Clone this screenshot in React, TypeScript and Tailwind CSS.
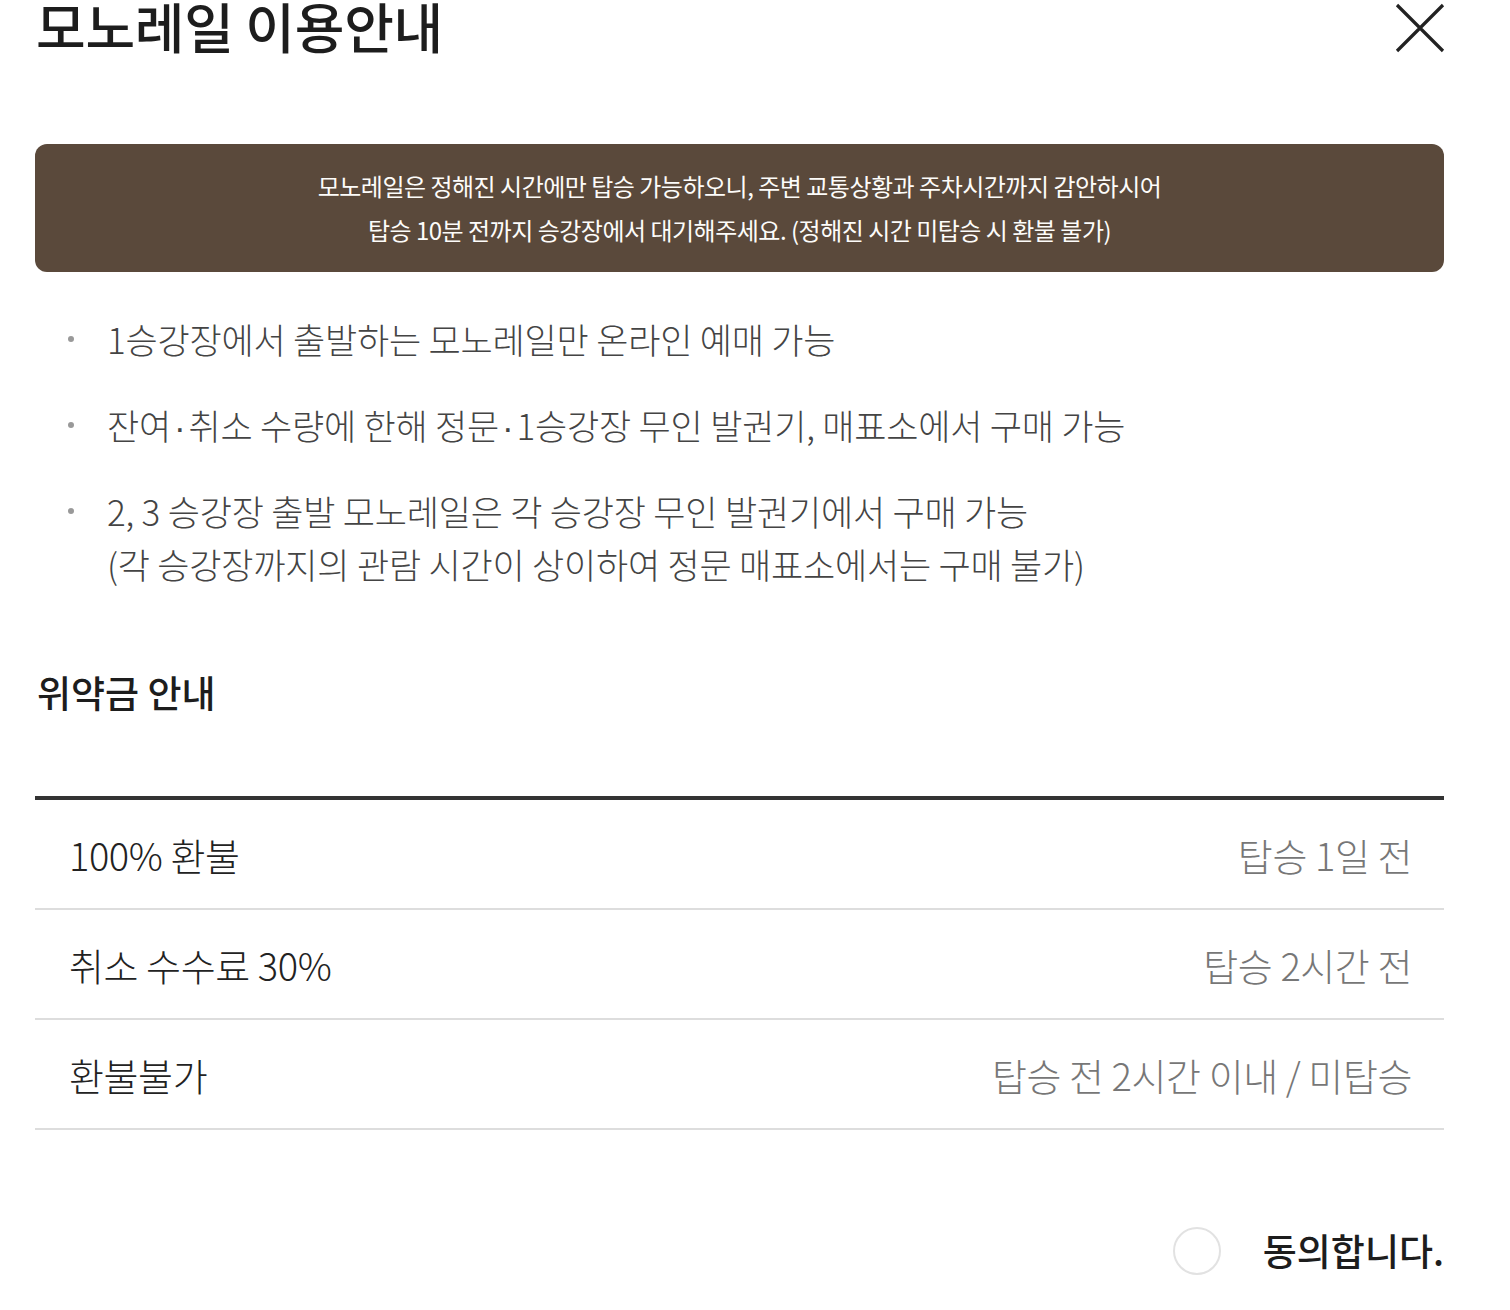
const rows = [
  { label: "100% 환불", when: "탑승 1일 전" },
  { label: "취소 수수료 30%", when: "탑승 2시간 전" },
  { label: "환불불가", when: "탑승 전 2시간 이내 / 미탑승" },
]

function Dot() {
  return <span className="mx-[3px] leading-none font-['Liberation_Sans']">·</span>
}

function CloseIcon() {
  return (
    <svg width="50" height="50" viewBox="0 0 50 50" className="shrink-0">
      <path d="M2 2L48 48M48 2L2 48" stroke="#222" strokeWidth="3.2" fill="none" />
    </svg>
  )
}

function Bullet({ children }: { children: React.ReactNode }) {
  return (
    <li className="flex">
      <span className="w-[72px] shrink-0 flex justify-center pt-[24px]">
        <span className="block w-[6px] h-[6px] rounded-full bg-[#999]" />
      </span>
      <div>{children}</div>
    </li>
  )
}

export default function App() {
  return (
    <div
      className="w-[1510px] h-[1310px] overflow-hidden bg-white text-[#1d1d1d]"
      style={{ fontFamily: '"Noto Sans CJK KR", "Noto Sans", sans-serif' }}
    >
      <div className="ml-[35px] w-[1409px]">
        {/* header */}
        <div className="flex justify-between items-start -mt-[14px]">
          <h1 className="text-[54px] leading-[80px] font-medium tracking-[-0.3px] pl-[1px]">모노레일 이용안내</h1>
          <div className="mt-[17px] -mr-[1px]">
            <CloseIcon />
          </div>
        </div>

        {/* notice banner */}
        <div className="mt-[78px] rounded-[12px] bg-[#5a493b] py-[20px] text-center text-[#fdfcfa] text-[24px] leading-[44px] tracking-[-0.5px]">
          <p>모노레일은 정해진 시간에만 탑승 가능하오니, 주변 교통상황과 주차시간까지 감안하시어</p>
          <p>탑승 10분 전까지 승강장에서 대기해주세요. (정해진 시간 미탑승 시 환불 불가)</p>
        </div>

        <ul className="mt-[40px] flex flex-col gap-[33px] text-[35px] leading-[53px] font-light text-[#444] tracking-[-0.2px]">
          <Bullet>
            <p>1승강장에서 출발하는 모노레일만 온라인 예매 가능</p>
          </Bullet>
          <Bullet>
            <p>잔여<Dot />취소 수량에 한해 정문<Dot />1승강장 무인 발권기, 매표소에서 구매 가능</p>
          </Bullet>
          <Bullet>
            <p>2, 3 승강장 출발 모노레일은 각 승강장 무인 발권기에서 구매 가능</p>
            <p>(각 승강장까지의 관람 시간이 상이하여 정문 매표소에서는 구매 불가)</p>
          </Bullet>
        </ul>

        <h2 className="mt-[77px] text-[37px] leading-[50px] font-medium pl-[2px]">위약금 안내</h2>

        <div className="mt-[79px] border-t-[4px] border-[#333]">
          {rows.map(r => (
            <div key={r.label} className="flex justify-between items-center h-[110px] border-b-2 border-[#ddd] pl-[34px] pr-[32px] text-[38px] font-light tracking-[-0.4px]">
              <span className="text-[#222]">{r.label}</span>
              <span className="text-[#777]">{r.when}</span>
            </div>
          ))}
        </div>

        <div className="mt-[93px] flex justify-end items-center gap-[42px]">
          <span className="block w-[48px] h-[48px] rounded-full border-2 border-[#e2e2e2]" />
          <span className="text-[37px] font-medium">동의합니다.</span>
        </div>
      </div>
    </div>
  )
}
